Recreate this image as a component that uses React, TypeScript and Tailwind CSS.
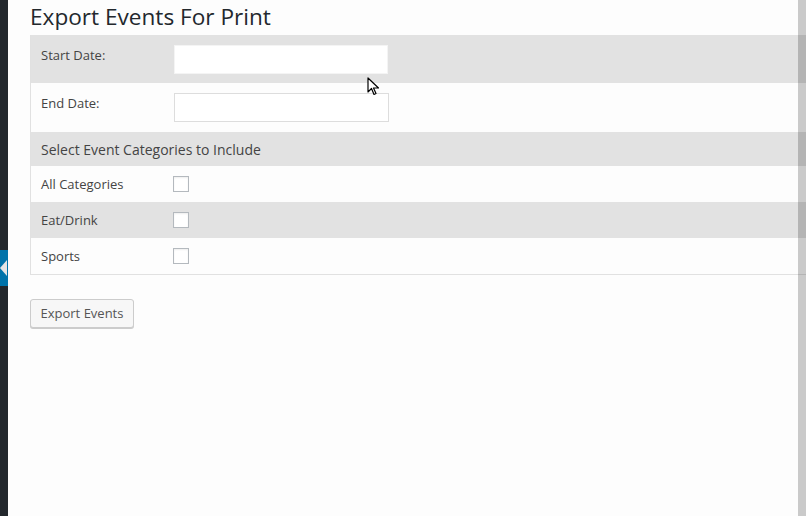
import React from "react";

const font = { fontFamily: '"Open Sans", "Noto Sans", sans-serif' };

interface CategoryRowProps {
  label: string;
  shaded: boolean;
}

function CategoryRow({ label, shaded }: CategoryRowProps) {
  return (
    <div
      className={
        shaded
          ? "flex h-[36px] items-center bg-[#e2e2e2]"
          : "flex h-[36px] items-center bg-[#fdfdfd]"
      }
    >
      <div className="w-[142px] pl-[10px] pt-[1px] text-[13px] text-[#444]">{label}</div>
      <span className="block h-[16px] w-[16px] border border-[#b4b9be] bg-white shadow-[inset_0_1px_2px_rgba(0,0,0,0.07)]" />
    </div>
  );
}

export default function App() {
  return (
    <div className="relative flex h-[516px] w-[806px] overflow-hidden bg-[#fdfdfd]" style={font}>
      {/* admin sidebar edge */}
      <div className="flex w-[8px] shrink-0 flex-col bg-[#23282d]">
        <div className="h-[250px]" />
        <div className="flex h-[36px] items-center bg-[#0073aa]">
          <svg width="7" height="16" viewBox="0 0 7 16">
            <polygon points="0,8 7,0 7,16" fill="#e5e5e5" />
          </svg>
        </div>
      </div>

      <main className="min-w-0 flex-1 pl-[22px]">
        <h1 className="pt-[2px] pb-[4px] text-[22.6px] leading-[29px] text-[#23282d]">
          Export Events For Print
        </h1>

        <div className="border-b border-l border-[#e1e1e1] text-[13px] text-[#444]">
          <div className="flex items-start bg-[#e2e2e2] pt-[10px] pb-[9px]">
            <div className="w-[143px] pl-[10px] pt-[1px] leading-[18px]">Start Date:</div>
            <input
              type="text"
              className="h-[29px] w-[214px] border border-[#f4f4f4] bg-white outline-none"
            />
          </div>
          <div className="flex items-start bg-[#fdfdfd] py-[10px]">
            <div className="w-[143px] pl-[10px] pt-[1px] leading-[18px]">End Date:</div>
            <input
              type="text"
              className="h-[29px] w-[215px] border border-[#dddddd] bg-white outline-none"
            />
          </div>
          <div className="flex h-[34px] items-center bg-[#e2e2e2] pl-[10px] text-[14px]">
            Select Event Categories to Include
          </div>
          <CategoryRow label="All Categories" shaded={false} />
          <CategoryRow label="Eat/Drink" shaded />
          <CategoryRow label="Sports" shaded={false} />
        </div>

        <button className="mt-[24px] h-[29px] rounded-[3px] border border-[#cccccc] bg-[#f7f7f7] px-[9.5px] text-[13px] text-[#555] shadow-[0_1px_0_#cccccc]">
          Export Events
        </button>
      </main>

      {/* scrollbar strip */}
      <div className="absolute top-0 right-0 bottom-0 w-[8px] bg-black/20" />

      {/* mouse cursor */}
      <svg className="absolute left-[367px] top-[77px]" width="13" height="20" viewBox="0 0 13 20">
        <path
          d="M1 1 L1 15 L4.5 11.5 L7 17.5 L9 16.5 L6.5 11 L11.5 11 Z"
          fill="white"
          stroke="black"
          strokeWidth="1.2"
          strokeLinejoin="round"
        />
      </svg>
    </div>
  );
}
